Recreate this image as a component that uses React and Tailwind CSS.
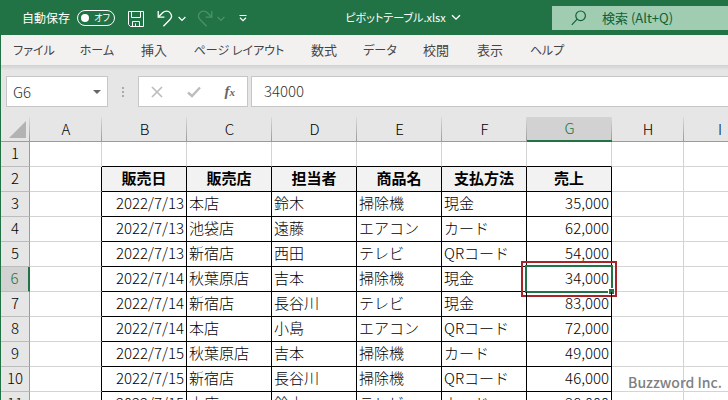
import React, { useState } from "react";

const menus = [
  { label: "ファイル", size: "w-[66px] text-xs" },
  { label: "ホーム", size: "w-[60px] text-xs" },
  { label: "挿入", size: "w-[54px] text-[13px]" },
  { label: "ページ レイアウト", size: "w-[116px] text-xs" },
  { label: "数式", size: "w-[54px] text-[13px]" },
  { label: "データ", size: "w-[58px] text-xs" },
  { label: "校閲", size: "w-[54px] text-[13px]" },
  { label: "表示", size: "w-[54px] text-[13px]" },
  { label: "ヘルプ", size: "w-[60px] text-xs" },
];

const columns = ["A", "B", "C", "D", "E", "F", "G", "H", "I"];

const headings = ["販売日", "販売店", "担当者", "商品名", "支払方法", "売上"];

const sales = [
  ["2022/7/13", "本店", "鈴木", "掃除機", "現金", "35,000"],
  ["2022/7/13", "池袋店", "遠藤", "エアコン", "カード", "62,000"],
  ["2022/7/13", "新宿店", "西田", "テレビ", "QRコード", "54,000"],
  ["2022/7/14", "秋葉原店", "吉本", "掃除機", "現金", "34,000"],
  ["2022/7/14", "新宿店", "長谷川", "テレビ", "現金", "83,000"],
  ["2022/7/14", "本店", "小島", "エアコン", "QRコード", "72,000"],
  ["2022/7/15", "秋葉原店", "吉本", "掃除機", "カード", "49,000"],
  ["2022/7/15", "新宿店", "長谷川", "掃除機", "QRコード", "46,000"],
  ["2022/7/15", "本店", "鈴木", "テレビ", "カード", "38,000"],
];

const SELECTED_ROW = 6;
const SELECTED_COLUMN = "G";

const Chevron = ({ className }) => (
  <svg viewBox="0 0 8 6" className={className} fill="none" stroke="currentColor" strokeWidth="1.2">
    <path d="M0.6 1 L4 4.4 L7.4 1" />
  </svg>
);

const TitleBar = () => {
  const [autoSave, setAutoSave] = useState(false);

  return (
    <header className="flex h-[35px] shrink-0 items-center bg-[#217346] pl-[21px] text-white">
      <span id="autosave" className="text-xs">自動保存</span>
      <button
        type="button"
        role="switch"
        aria-checked={autoSave}
        aria-labelledby="autosave"
        onClick={() => setAutoSave(!autoSave)}
        className="ml-[7px] flex h-4 w-[38px] items-center justify-between rounded-full border border-white pr-1 pl-[3px]"
      >
        <span className="size-2 rounded-full bg-white" />
        <span className="text-[9px] leading-none [font-feature-settings:'palt']">オフ</span>
      </button>

      <button type="button" aria-label="上書き保存" className="ml-[13px] pt-[3px]">
        <svg viewBox="0 0 16 16" className="size-4" fill="none" stroke="currentColor" strokeWidth="1">
          <path d="M0.5 0.5 H15.5 V15.5 H2.5 L0.5 13.5 Z" />
          <path d="M3.5 0.5 V6.5 H12.5 V0.5" />
          <path d="M4.5 15.5 V10.5 H11.5 V15.5 M7.5 12.5 V15.5" />
        </svg>
      </button>
      <button type="button" aria-label="元に戻す" className="ml-[13px] flex items-center gap-[5px] pt-[2px]">
        <svg viewBox="0 0 16 17" className="h-[17px] w-4" fill="none" stroke="currentColor" strokeWidth="1.3">
          <path d="M1.2 1 V7.2 H7.4" />
          <path d="M1.4 7 L5.6 2.8 C8 0.5 11.4 0.6 13.2 2.8 C15 5 14.8 7.8 12.8 9.8 L6.4 16.2" />
        </svg>
        <Chevron className="h-[6px] w-2" />
      </button>
      <button type="button" disabled aria-label="やり直し" className="ml-[11px] flex items-center gap-[4px] pt-[2px] text-[#4d9069]">
        <svg viewBox="0 0 16 17" className="h-[17px] w-4" fill="none" stroke="currentColor" strokeWidth="1.3">
          <path d="M14.8 1 V7.2 H8.6" />
          <path d="M14.6 7 L10.4 2.8 C8 0.5 4.6 0.6 2.8 2.8 C1 5 1.2 7.8 3.2 9.8 L9.6 16.2" />
        </svg>
        <Chevron className="h-[6px] w-2" />
      </button>
      <button type="button" aria-label="クイック アクセス ツール バーのユーザー設定" className="ml-[14px]">
        <svg viewBox="0 0 8 8" className="size-2" fill="none" stroke="currentColor" strokeWidth="1.2">
          <path d="M0.5 1.5 H7.5 M1 3.8 L4 6.6 L7 3.8" />
        </svg>
      </button>

      <button type="button" className="mx-auto flex items-center gap-[5px] pl-[7px] text-[11px]">
        <span className="[font-feature-settings:'palt']">ピボットテーブル.xlsx</span>
        <Chevron className="h-[7px] w-[10px]" />
      </button>

      <label className="flex h-6 w-[176px] items-center gap-[15px] bg-[#a0cdb2] pl-[19px] text-[#0f6034]">
        <svg viewBox="0 0 16 16" className="size-4 shrink-0" fill="none" stroke="currentColor" strokeWidth="1.2">
          <circle cx="9.6" cy="5.8" r="4.8" />
          <path d="M6.2 9.2 L0.8 14.8" />
        </svg>
        <input
          type="text"
          aria-label="検索"
          placeholder="検索 (Alt+Q)"
          className="w-full min-w-0 bg-transparent text-[13px] outline-none placeholder:text-[#0f6034]"
        />
      </label>
    </header>
  );
};

const MenuBar = () => (
  <nav className="flex h-[30px] shrink-0 items-center bg-[#f3f1f0]">
    {menus.map((menu) => (
      <button
        key={menu.label}
        type="button"
        className={`${menu.size} shrink-0 text-center whitespace-nowrap text-[#444] [font-feature-settings:'palt']`}
      >
        {menu.label}
      </button>
    ))}
  </nav>
);

const FormulaBar = () => (
  <div className="flex h-[52px] shrink-0 items-start bg-linear-to-b from-[#d2d0d0] to-[#e6e6e6] to-10% pt-[11px] pl-[5px]">
    <div className="flex h-[31px] w-[102px] items-center border border-[#c6c6c6] bg-white px-[6px]">
      <input
        type="text"
        aria-label="名前ボックス"
        defaultValue="G6"
        className="w-full min-w-0 pt-[2px] text-[15px] font-light text-[#333] outline-none"
      />
      <svg viewBox="0 0 8 4" className="h-1 w-2 shrink-0 fill-[#666]">
        <path d="M0 0 H8 L4 4 Z" />
      </svg>
    </div>
    <div className="flex h-[31px] w-[30px] flex-col items-center justify-center gap-[2px]">
      <span className="size-[2px] bg-[#aaa]" />
      <span className="size-[2px] bg-[#aaa]" />
      <span className="size-[2px] bg-[#aaa]" />
    </div>
    <div className="flex h-[31px] w-[110px] items-center justify-between border border-[#c6c6c6] bg-white px-3">
      <button type="button" aria-label="キャンセル">
        <svg viewBox="0 0 12 12" className="size-3" fill="none" stroke="#bdbdbd" strokeWidth="1.7">
          <path d="M1 1 L11 11 M11 1 L1 11" />
        </svg>
      </button>
      <button type="button" aria-label="入力">
        <svg viewBox="0 0 14 12" className="h-3 w-[14px]" fill="none" stroke="#bdbdbd" strokeWidth="2.4">
          <path d="M1 6.5 L5 10 L13 1.5" />
        </svg>
      </button>
      <button
        type="button"
        aria-label="関数の挿入"
        className="font-['Liberation_Serif',serif] text-[15px] leading-none font-bold text-[#666] italic"
      >
        f<span className="text-[11px]">x</span>
      </button>
    </div>
    <input
      type="text"
      aria-label="数式バー"
      defaultValue="34000"
      className="ml-[3px] h-[31px] min-w-0 flex-1 border border-r-0 border-[#c6c6c6] bg-white pb-[3px] pl-3 text-[15px] font-light text-[#333] outline-none"
    />
  </div>
);

const ColumnHeader = ({ name }) => {
  const selected = name === SELECTED_COLUMN;
  return (
    <th
      scope="col"
      className={`relative h-[25px] p-0 pb-[2px] text-[15px] leading-none font-light ${
        selected
          ? "border-b-2 border-[#217346] bg-[#d2d2d2] text-[#217346]"
          : "border-b border-[#9b9b9b] bg-[#e6e6e6] text-black"
      }`}
    >
      {name}
      <span className="absolute inset-y-0 right-0 w-px bg-linear-to-b from-[#dadada] to-[#9b9b9b]" />
    </th>
  );
};

const RowHeader = ({ row }) => {
  const selected = row === SELECTED_ROW;
  return (
    <th
      scope="row"
      className={`h-[25px] border-b border-b-[#bcbcbc] p-0 pb-[3px] text-[15px] leading-none font-light ${
        selected
          ? "border-r-2 border-r-[#217346] bg-[#d2d2d2] text-[#217346]"
          : "border-r border-r-[#9b9b9b] bg-[#e6e6e6] text-black"
      }`}
    >
      {row}
    </th>
  );
};

const EmptyCell = ({ border }) => <td className={`h-[25px] border-r border-b p-0 ${border}`} />;

const light = "border-[#d4d4d4]";
const darkRight = "border-b-[#d4d4d4] border-r-black";
const darkBottom = "border-b-black border-r-[#d4d4d4]";

const DataCell = ({ value, index, selected }) => {
  const numeric = index === 0 || index === 5;
  return (
    <td
      className={`relative h-[25px] border-r border-b border-black p-0 pb-[3px] text-[15px] leading-none font-light whitespace-nowrap text-black ${
        numeric ? "pr-[2px] text-right" : "pl-[2px]"
      }`}
    >
      {value}
      {selected && (
        <>
          <span className="absolute -inset-[2px] border-2 border-[#217346]" />
          <span className="absolute -right-[3px] -bottom-[3px] size-[6px] border-t border-l border-white bg-[#217346]" />
          <span className="absolute -inset-[6px] border-2 border-[#a82428]" />
        </>
      )}
    </td>
  );
};

const Sheet = () => (
  <main className="relative min-h-0 flex-1 overflow-hidden bg-white">
    <table className="w-[755px] table-fixed border-separate border-spacing-0">
      <colgroup>
        <col className="w-[29px]" />
        <col className="w-[72px]" />
        <col span={6} className="w-[85px]" />
        <col className="w-[72px]" />
        <col className="w-[72px]" />
      </colgroup>
      <thead>
        <tr>
          <td className="relative h-[25px] border-b border-[#9b9b9b] bg-[#e6e6e6] p-0">
            <svg viewBox="0 0 17 17" className="mt-px ml-2 size-[17px] fill-[#b3b3b3]">
              <path d="M17 0 V17 H0 Z" />
            </svg>
            <span className="absolute inset-y-0 right-0 w-px bg-linear-to-b from-[#dadada] to-[#9b9b9b]" />
          </td>
          {columns.map((name) => (
            <ColumnHeader key={name} name={name} />
          ))}
        </tr>
      </thead>
      <tbody>
        <tr>
          <RowHeader row={1} />
          <EmptyCell border={light} />
          {headings.map((heading) => (
            <EmptyCell key={heading} border={darkBottom} />
          ))}
          <EmptyCell border={light} />
          <EmptyCell border={light} />
        </tr>
        <tr>
          <RowHeader row={2} />
          <EmptyCell border={darkRight} />
          {headings.map((heading) => (
            <th
              key={heading}
              scope="col"
              className="h-[25px] border-r border-b border-black bg-[#f2f2f2] p-0 pb-[3px] text-[15px] leading-none font-bold text-black"
            >
              {heading}
            </th>
          ))}
          <EmptyCell border={light} />
          <EmptyCell border={light} />
        </tr>
        {sales.map((sale, i) => (
          <tr key={i}>
            <RowHeader row={i + 3} />
            <EmptyCell border={darkRight} />
            {sale.map((value, index) => (
              <DataCell
                key={index}
                value={value}
                index={index}
                selected={i + 3 === SELECTED_ROW && columns[index + 1] === SELECTED_COLUMN}
              />
            ))}
            <EmptyCell border={light} />
            <EmptyCell border={light} />
          </tr>
        ))}
      </tbody>
    </table>
    <p className="absolute right-[6px] bottom-2 text-sm font-medium text-[#808080]">
      Buzzword Inc.
    </p>
  </main>
);

const App = () => {
  return (
    <div className="flex h-screen flex-col overflow-hidden border-l border-[#217346] font-['Noto_Sans_CJK_JP',sans-serif]">
      <TitleBar />
      <MenuBar />
      <FormulaBar />
      <Sheet />
    </div>
  );
};

export default App;
